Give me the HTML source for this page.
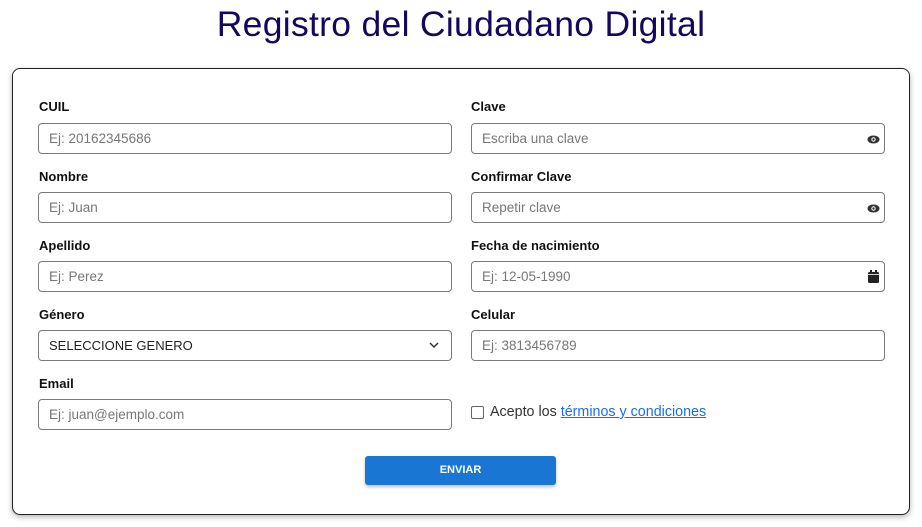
<!DOCTYPE html>
<html><head><meta charset="utf-8"><style>
body{margin:0;width:922px;height:527px;background:#fff;font-family:"Liberation Sans",sans-serif;position:relative;overflow:hidden}
h1{position:absolute;top:2px;left:0;width:922px;text-align:center;margin:0;font-weight:normal;font-size:35.5px;line-height:44px;color:#13075e;letter-spacing:0.3px}
.card{position:absolute;left:12px;top:68px;width:896px;height:445px;border:1px solid #222;border-radius:8px;box-shadow:0 2px 6px rgba(0,0,0,.3)}
.lab{position:absolute;font-weight:bold;font-size:13px;color:#111}
.in{position:absolute;height:29px;border:1px solid #7a7a7a;border-radius:4px;font-size:13.5px;color:#777;line-height:29px;padding-left:10px;box-sizing:content-box;width:402px}
.ic{position:absolute;right:4px;top:9px}
.btn{position:absolute;left:365px;top:456px;width:191px;height:29px;background:#1976d2;border-radius:3px;color:#fff;font-weight:bold;font-size:11px;text-align:center;line-height:29px;box-shadow:0 2px 3px rgba(0,0,0,.25)}
</style></head><body>
<h1>Registro del Ciudadano Digital</h1>
<div class="card"></div>
<div class="lab" style="left:39px;top:99px">CUIL</div>
<div class="in" style="left:38px;top:123px">Ej: 20162345686</div>
<div class="lab" style="left:39px;top:169px">Nombre</div>
<div class="in" style="left:38px;top:192px">Ej: Juan</div>
<div class="lab" style="left:39px;top:238px">Apellido</div>
<div class="in" style="left:38px;top:261px">Ej: Perez</div>
<div class="lab" style="left:39px;top:307px">Género</div>
<div class="in" style="left:38px;top:330px;color:#222;font-size:13px">SELECCIONE GENERO<svg class="ic" style="right:12px;top:11px" width="10" height="7" viewBox="0 0 10 7"><path d="M1 1l4 4 4-4" stroke="#333" stroke-width="1.5" fill="none"/></svg></div>
<div class="lab" style="left:39px;top:376px">Email</div>
<div class="in" style="left:38px;top:399px">Ej: juan@ejemplo.com</div>

<div class="lab" style="left:471px;top:99px">Clave</div>
<div class="in" style="left:471px;top:123px">Escriba una clave<svg class="ic" style="top:11px" width="13" height="9" viewBox="0 0 13 9"><ellipse cx="6.5" cy="4.5" rx="6" ry="4" fill="#333"/><circle cx="6.5" cy="4.5" r="2.2" fill="#fff"/><circle cx="6.5" cy="4.5" r="1.2" fill="#333"/></svg></div>
<div class="lab" style="left:471px;top:169px">Confirmar Clave</div>
<div class="in" style="left:471px;top:192px">Repetir clave<svg class="ic" style="top:11px" width="13" height="9" viewBox="0 0 13 9"><ellipse cx="6.5" cy="4.5" rx="6" ry="4" fill="#333"/><circle cx="6.5" cy="4.5" r="2.2" fill="#fff"/><circle cx="6.5" cy="4.5" r="1.2" fill="#333"/></svg></div>
<div class="lab" style="left:471px;top:238px">Fecha de nacimiento</div>
<div class="in" style="left:471px;top:261px">Ej: 12-05-1990<svg class="ic" style="top:8px;right:5px" width="11" height="13" viewBox="0 0 11 13"><rect x="0" y="2" width="11" height="11" rx="1.5" fill="#222"/><rect x="2" y="0" width="2" height="3" fill="#222"/><rect x="7" y="0" width="2" height="3" fill="#222"/><rect x="0" y="4" width="11" height="0.8" fill="#fff"/></svg></div>
<div class="lab" style="left:471px;top:307px">Celular</div>
<div class="in" style="left:471px;top:330px">Ej: 3813456789</div>
<div style="position:absolute;left:471px;top:406px;width:11px;height:11px;border:1px solid #666;border-radius:2px"></div>
<div style="position:absolute;left:490px;top:404px;font-size:14.3px;color:#333">Acepto los <span style="color:#1a6cf0;text-decoration:underline">términos y condiciones</span></div>
<div class="btn">ENVIAR</div>
</body></html>
